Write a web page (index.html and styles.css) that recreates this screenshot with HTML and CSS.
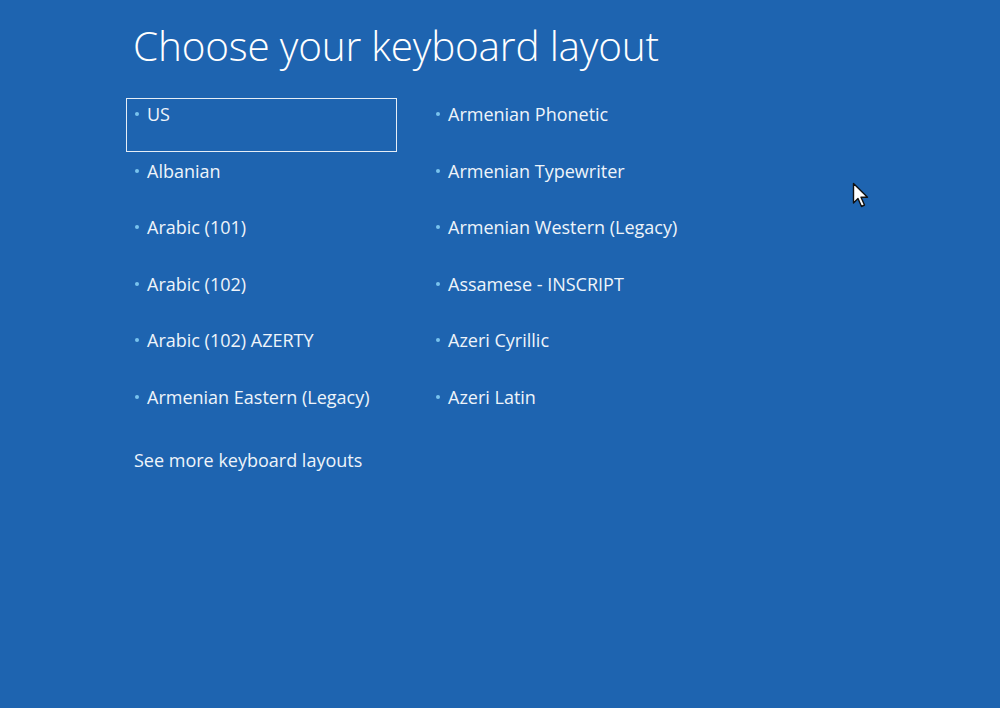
FILE: index.html
```html
<!DOCTYPE html>
<html lang="en">
<head>
    <meta charset="UTF-8">
    <title>Choose your keyboard layout</title>
    <link rel="stylesheet" href="styles.css">
</head>
<body>
    <div class="screen">
        <h1 class="title">Choose your keyboard layout</h1>

        <div class="layouts">
            <div class="layout selected"><span class="dot"></span>US</div>
            <div class="layout"><span class="dot"></span>Albanian</div>
            <div class="layout"><span class="dot"></span>Arabic (101)</div>
            <div class="layout"><span class="dot"></span>Arabic (102)</div>
            <div class="layout"><span class="dot"></span>Arabic (102) AZERTY</div>
            <div class="layout"><span class="dot"></span>Armenian Eastern (Legacy)</div>
            <div class="layout"><span class="dot"></span>Armenian Phonetic</div>
            <div class="layout"><span class="dot"></span>Armenian Typewriter</div>
            <div class="layout"><span class="dot"></span>Armenian Western (Legacy)</div>
            <div class="layout"><span class="dot"></span>Assamese - INSCRIPT</div>
            <div class="layout"><span class="dot"></span>Azeri Cyrillic</div>
            <div class="layout"><span class="dot"></span>Azeri Latin</div>
        </div>

        <a class="more" href="#">See more keyboard layouts</a>
    </div>

    <!-- mouse pointer -->
    <svg class="cursor" width="20" height="30" viewBox="0 0 20 30">
        <path d="M1.5 1.5 L1.5 21 L6 16.5 L9.5 24.5 L12.5 23 L9 15.2 L15.5 15.2 Z" fill="#fff" stroke="#111" stroke-width="1.4" stroke-linejoin="round"/>
    </svg>
</body>
</html>
```

FILE: styles.css
```css
* {
    box-sizing: border-box;
    margin: 0;
    padding: 0;
}

body {
    font-family: 'Open Sans', 'Noto Sans', sans-serif;
    background: #1e64b0;
    color: #fff;
    width: 1000px;
    height: 708px;
    overflow: hidden;
    position: relative;
}

.screen {
    padding: 20px 0 0 126px;
}

.title {
    font-size: 40.5px;
    font-weight: 300;
    line-height: 52px;
    margin-left: 7px;
    margin-bottom: 26px;
    letter-spacing: -0.2px;
}

.layouts {
    display: grid;
    grid-template-rows: repeat(6, 54px);
    grid-auto-flow: column;
    grid-auto-columns: 271px;
    column-gap: 30px;
    row-gap: 2.5px;
}

.layout {
    display: flex;
    align-items: flex-start;
    padding: 3px 0 0 8px;
    font-size: 18px;
    line-height: 24px;
    color: #eef4fa;
    border: 1.5px solid transparent;
    white-space: nowrap;
}

.layout.selected {
    border-color: #e6eef7;
}

.dot {
    width: 4px;
    height: 4px;
    border-radius: 50%;
    background: #79c3ee;
    margin: 10px 8px 0 0;
    flex-shrink: 0;
}

.more {
    display: inline-block;
    margin: 13px 0 0 8px;
    font-size: 18px;
    color: #eef4fa;
    text-decoration: none;
}

.cursor {
    position: absolute;
    left: 852px;
    top: 182px;
}
```
